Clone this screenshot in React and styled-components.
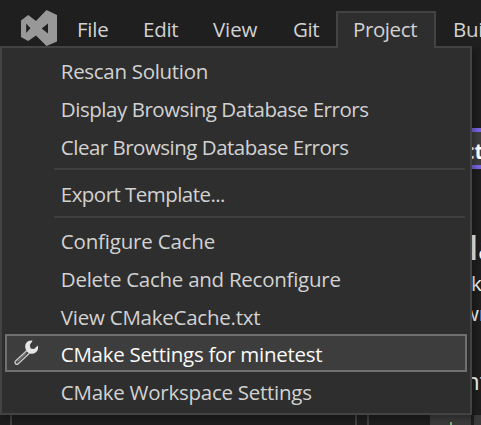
import React from "react";
import styled, { createGlobalStyle } from "styled-components";

const GlobalStyle = createGlobalStyle`
  * { box-sizing: border-box; }
  body { margin: 0; background: #1f1f1f; overflow: hidden; }
`;

const Window = styled.div`
  position: relative;
  display: flex;
  flex-direction: column;
  width: 481px;
  height: 425px;
  overflow: hidden;
  background: #1f1f1f;
  color: #d2d2d2;
  font-family: "Open Sans", "Noto Sans", sans-serif;
  font-size: 20.5px;
  line-height: 28px;
`;

const MenuBar = styled.nav`
  display: flex;
  align-items: flex-end;
  flex: none;
  height: 48px;
  padding-left: 20px;
`;

const Logo = styled.svg`
  flex: none;
  width: 38px;
  height: 38px;
`;

const MenuTitle = styled.div`
  flex: none;
  width: ${(p) => p.$width}px;
  height: 37px;
  padding: 2px 0 0 ${(p) => p.$pad}px;
  border: 2px solid ${(p) => (p.$open ? "#434343" : "transparent")};
  border-bottom: 0;
  background: ${(p) => (p.$open ? "#2e2e2e" : "transparent")};
  letter-spacing: ${(p) => p.$spacing}px;
  white-space: nowrap;
  position: relative;
  z-index: ${(p) => (p.$open ? 2 : 0)};
`;

const Workspace = styled.div`
  display: flex;
  flex: 1;
  flex-direction: column;
  padding-left: 472px;
`;

const SidePage = styled.div`
  flex: none;
  height: 367px;
  overflow: hidden;
  background: #1e1e1e;
  padding-top: 80px;
`;

const SideButton = styled.div`
  height: 41px;
  border: solid #7564dc;
  border-width: 4px 0;
  background: #3d3d3d;
  color: #ffffff;
  font-weight: 700;
  line-height: 38px;
  text-indent: -8px;
  white-space: nowrap;
  overflow: hidden;
`;

const SideText = styled.div`
  height: ${(p) => p.$height}px;
  line-height: ${(p) => p.$line}px;
  font-size: ${(p) => p.$size}px;
  font-weight: ${(p) => p.$weight ?? 400};
  text-indent: ${(p) => p.$shift}px;
  color: #f4f4f4;
  white-space: nowrap;
  overflow: hidden;
`;

const BottomStrip = styled.div`
  display: flex;
  flex: 1;
  margin-left: -472px;
  background: #1e1e1e;
`;

const Pane = styled.div`
  flex: none;
  width: ${(p) => p.$width}px;
  border-right: 2px solid #404040;
`;

const ToolTab = styled.div`
  display: flex;
  flex: none;
  justify-content: center;
  align-items: flex-end;
  width: 41px;
  margin-left: ${(p) => p.$gap}px;
  background: #3a3a3a;
`;

const Popup = styled.div`
  position: absolute;
  top: 46px;
  left: 0;
  width: 472px;
  height: 369px;
  padding: 3px;
  border: 2px solid #434343;
  background: #2e2e2e;
  box-shadow: 3px 4px 5px rgba(0, 0, 0, 0.25);
`;

const Item = styled.div`
  display: flex;
  align-items: center;
  height: 37.7px;
  border: 2px solid ${(p) => (p.$active ? "#707070" : "transparent")};
  background: ${(p) => (p.$active ? "#3d3d3d" : "transparent")};
  color: ${(p) => (p.$active ? "#fafafa" : "#d2d2d2")};
`;

const IconSlot = styled.div`
  display: flex;
  flex: none;
  width: 53.8px;
  padding-left: 5px;
`;

const Label = styled.span`
  padding-top: 3px;
  letter-spacing: ${(p) => p.$spacing}px;
  white-space: nowrap;
`;

const Separator = styled.div`
  height: 2px;
  margin: 4.4px 2px 3.2px 49px;
  background: #404040;
`;

function Wrench() {
  return (
    <svg width="28" height="28" viewBox="0 0 28 28">
      <path d="M14.6 11.8 3.4 22.2a1.9 1.9 0 0 0 2.6 2.7L17.4 14.2" fill="#3d3d3d" stroke="#cacaca" strokeWidth="1.4" />
      <path d="m5.4 22.9 9-8.8" stroke="#a5a5a5" strokeWidth=".9" />
      <path
        d="M20.6 1.7c-4.5-1-8.3 2.8-7.2 7.2.9 5.1 6.1 7.5 10.2 4.7 2.3-1.6 3-4.4 2.2-7.1l-3.7 3.5-3.5-.5-.8-3.6z"
        fill="#e6e6e6"
      />
    </svg>
  );
}

const titles = [
  ["File", 66, -0.25, 17],
  ["Edit", 70, -0.25, 17],
  ["View", 80, -0.1, 17],
  ["Git", 62, -0.4, 17],
  ["Project", 100, -0.4, 15, true],
  ["Build", 70, -0.3, 15],
];

const groups = [
  [
    ["Rescan Solution", -0.3],
    ["Display Browsing Database Errors", -0.46],
    ["Clear Browsing Database Errors", -0.5],
  ],
  [["Export Template...", -0.54]],
  [
    ["Configure Cache", -0.19],
    ["Delete Cache and Reconfigure", -0.26],
    ["View CMakeCache.txt", -0.24],
    ["CMake Settings for minetest", -0.27, true],
    ["CMake Workspace Settings", -0.26],
  ],
];

export default function App() {
  return (
    <Window>
      <GlobalStyle />
      <MenuBar>
        <Logo viewBox="0 0 38 38">
          <path
            fillRule="evenodd"
            d="M26.5 0 37 5v26.5L26.5 36 16 25.5 8.2 31 1 27V10.5L8.2 5 16 11zM6.2 13.6v9.4l4.2-4.7zM28 13.4l-6.3 5 6.3 5.2z"
            fill="#989898"
          />
        </Logo>
        {titles.map(([text, width, spacing, pad, open]) => (
          <MenuTitle key={text} $width={width} $spacing={spacing} $pad={pad} $open={open}>
            {text}
          </MenuTitle>
        ))}
      </MenuBar>
      <Workspace>
        <SidePage>
          <SideButton>ct</SideButton>
          <SideText $height={97} $line={157} $size={32} $shift={-3} $weight={600}>la</SideText>
          <SideText $height={34} $line={34} $size={20.5} $shift={-1}>k</SideText>
          <SideText $height={34} $line={27} $size={20.5} $shift={-9}>wn</SideText>
          <SideText $height={70} $line={94} $size={24} $shift={-7}>nt</SideText>
        </SidePage>
        <BottomStrip>
          <Pane $width={12} />
          <Pane $width={345} />
          <Pane $width={12} />
          <ToolTab $gap={61}>
            <svg width="8" height="3" viewBox="0 0 8 3">
              <path d="M3 0h2v3H3z" fill="#6cb47b" />
            </svg>
          </ToolTab>
          <ToolTab $gap={3} />
        </BottomStrip>
      </Workspace>
      <Popup>
        {groups.map((items, index) => (
          <React.Fragment key={index}>
            {index > 0 && <Separator />}
            {items.map(([text, spacing, active]) => (
              <Item key={text} $active={active}>
                <IconSlot>{active && <Wrench />}</IconSlot>
                <Label $spacing={spacing}>{text}</Label>
              </Item>
            ))}
          </React.Fragment>
        ))}
      </Popup>
    </Window>
  );
}
